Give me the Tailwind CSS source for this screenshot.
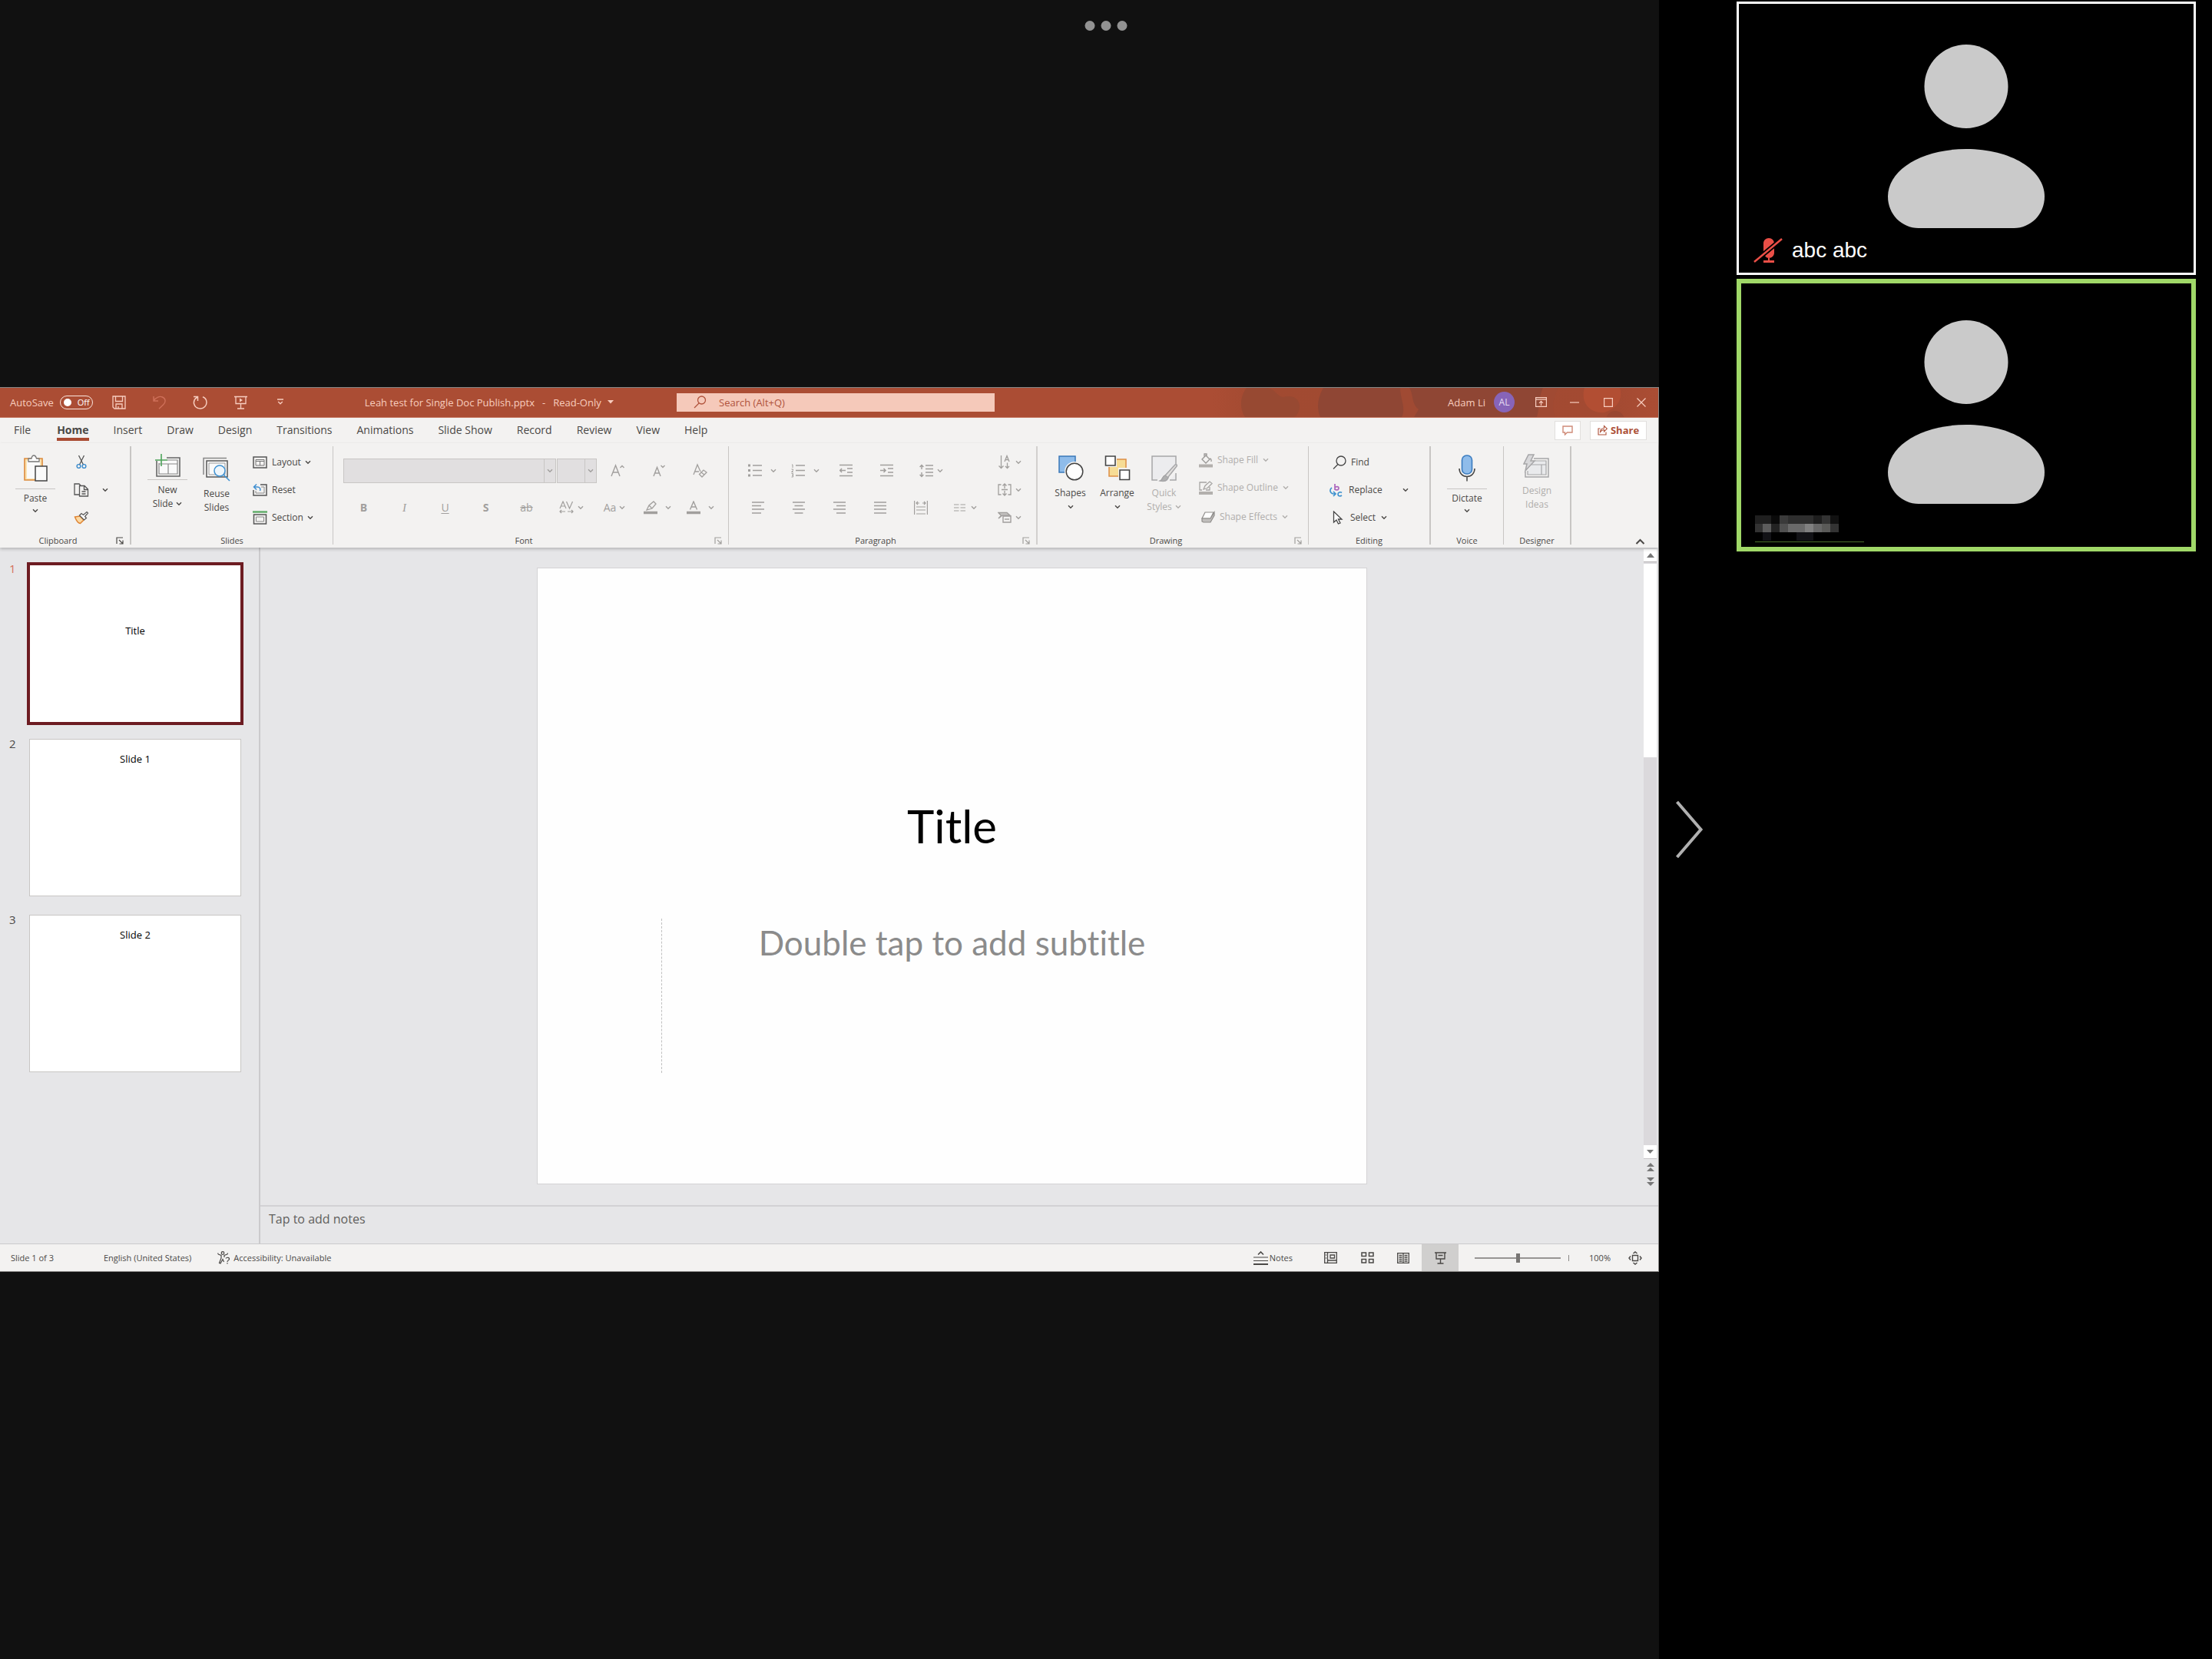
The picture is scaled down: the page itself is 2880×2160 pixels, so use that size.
<!DOCTYPE html>
<html lang="en">
<head>
    <meta charset="UTF-8">
    <meta name="viewport" content="width=device-width, initial-scale=1.0">
    <script src="https://cdn.jsdelivr.net/npm/@tailwindcss/browser@4"></script>
    <title>Meeting - shared screen</title>
</head>
<body class="bg-black">
  <!-- Shared icons -->
  <svg class="hidden">
    <symbol id="chev" viewBox="0 0 8 6"><path d="M1 1.2 L4 4.2 L7 1.2" fill="none" stroke="currentColor" stroke-width="1.4"/></symbol>
    <symbol id="launch" viewBox="0 0 10 10"><path d="M1 9V1H9M4 4L8.5 8.5M9 4.5V9H4.5" fill="none" stroke="currentColor" stroke-width="1.2"/></symbol>
    <symbol id="person" viewBox="0 0 204 239"><circle cx="102" cy="54.5" r="54.5"/><path d="M102 136C160 136 204 163 204 198C204 221 186 239 164 239H40C18 239 0 221 0 198C0 163 44 136 102 136Z"/></symbol>
  </svg>

  <div class="relative flex min-h-screen font-['Open_Sans','Noto_Sans',sans-serif] text-[12px] leading-[18px] text-[#4a4846]">
    <button type="button" aria-label="More" class="absolute top-[27px] left-1/2 -translate-x-1/2 flex gap-2 z-10">
      <span class="size-[13px] rounded-full bg-[#929292]"></span>
      <span class="size-[13px] rounded-full bg-[#929292]"></span>
      <span class="size-[13px] rounded-full bg-[#929292]"></span>
    </button>

    <!-- Shared screen -->
    <main class="w-3/4 bg-[#111] flex flex-col justify-center">
      <div class="border-t border-r border-b border-[#8a8886] bg-[#e6e6e8]">

        <!-- Title bar -->
        <header class="relative h-[39px] bg-[#ab4d34] border-b border-[#c4755f] flex items-center text-[13px] text-[#f8cdbf]">
          <svg class="absolute right-0 top-0 h-[38px] w-[580px]" viewBox="0 0 580 38" aria-hidden="true">
            <defs>
              <linearGradient id="deco"><stop offset="0" stop-color="#ab4d34"/><stop offset=".12" stop-color="#a14a31"/><stop offset=".9" stop-color="#a34a32"/><stop offset="1" stop-color="#ab4d34"/></linearGradient>
            </defs>
            <rect width="580" height="38" fill="url(#deco)"/>
            <path d="M44 0H72C82 2 84 12 92 12C106 8 114 16 113 26C112 32 109 38 104 38H42C34 26 36 10 44 0Z" fill="#974932"/>
            <path d="M144 0H430C436 12 430 26 434 38H140C134 24 138 10 144 0Z" fill="#8f4634"/>
            <path d="M244 0H256C262 10 258 20 268 28L262 38H246C252 26 244 14 244 0Z" fill="#a04a33"/>
            <path d="M430 0H450C444 12 440 24 446 38H422C426 24 424 12 430 0Z" fill="#a04a33"/>
            <path d="M484 0H530C534 14 528 26 510 32C492 34 478 20 484 0Z" fill="#b24e33"/>
            <circle cx="524" cy="42" r="12" fill="#994732"/>
          </svg>
          <label class="flex items-center ml-[13px] gap-2">
            AutoSave
            <input type="checkbox" class="peer sr-only">
            <span class="flex items-center w-[43px] h-[18px] rounded-full border-[1.5px] border-[#fbe5dd] pl-1 gap-2 text-[11px] text-white">
              <span class="size-[10px] rounded-full bg-white"></span>Off
            </span>
          </label>
          <button type="button" aria-label="Save" class="ml-[25px]">
            <svg width="18" height="18" viewBox="0 0 18 18" fill="none" stroke="currentColor" stroke-width="1.3"><path d="M1 1H17V17H3L1 15ZM4.500 1V7.500H13.500V1M5 17V11H13V17M8 17V14"/></svg>
          </button>
          <button type="button" aria-label="Undo" class="ml-[34px] text-[#cf705a]">
            <svg width="19" height="18" viewBox="0 0 19 18" fill="none" stroke="currentColor" stroke-width="1.400"><path d="M2 1V7H8M2 7C5 2 10 .5 13.500 2C18 4 18 8.500 15 11.500L9 17.200"/></svg>
          </button>
          <button type="button" aria-label="Redo" class="ml-[34px]">
            <svg width="19" height="18" viewBox="0 0 19 18" fill="none" stroke="currentColor" stroke-width="1.500"><path d="M1 1.500H6.500V7M6 2C2.500 4 1 7 1.500 10.500C2.500 14.500 6 17 10 17C14.500 16.800 18 13 18 9C18 6 16 3 13 1.800"/></svg>
          </button>
          <button type="button" aria-label="Start from beginning" class="ml-[34px]">
            <svg width="19" height="18" viewBox="0 0 19 18" fill="none" stroke="currentColor" stroke-width="1.300"><path d="M1 1.500H18M3 1.500V10.500H16V1.500M9.500 10.500V17M5 17H14"/><path d="M8 3.500L12 6L8 8.500Z" fill="currentColor" stroke="none"/></svg>
          </button>
          <button type="button" aria-label="Customize toolbar" class="ml-[37px]">
            <svg width="10" height="9" viewBox="0 0 10 9" fill="none" stroke="currentColor" stroke-width="1.300"><path d="M1 1H9M2.200 4L5 6.800L7.800 4"/></svg>
          </button>
          <h1 class="ml-[105px] flex gap-[10px]"><span>Leah test for Single Doc Publish.pptx</span><span>-</span><span>Read-Only</span></h1>
          <svg class="ml-2" width="8" height="5" viewBox="0 0 8 5"><path d="M0 0H8L4 4.500Z" fill="currentColor"/></svg>
          <div class="absolute left-[881px] top-[7px] flex items-center w-[414px] h-6 bg-[#f5c9ba] text-[#b0523b]">
            <svg class="ml-[22px]" width="17" height="17" viewBox="0 0 17 17" fill="none" stroke="currentColor" stroke-width="1.300"><circle cx="10.500" cy="6" r="5"/><path d="M7 10L1 16"/></svg>
            <input type="search" aria-label="Search" placeholder="Search (Alt+Q)" class="ml-4 flex-1 bg-transparent outline-none placeholder:text-[#b0523b]">
          </div>
          <div class="relative ml-auto flex items-center mr-4">
            <span class="mr-[11px]">Adam Li</span>
            <span class="size-[27px] rounded-full bg-[#8764b8] text-[#e6dcf2] text-[12px] flex items-center justify-center mr-[27px]">AL</span>
            <button type="button" aria-label="Ribbon display options" class="mr-[30px]"><svg width="15" height="13" viewBox="0 0 15 13" fill="none" stroke="currentColor" stroke-width="1.200"><path d="M.6 .6H14.400V12.400H.6ZM.6 3.200H14.400M7.500 11V5.500M5 7.800L7.500 5.300L10 7.800"/></svg></button>
            <button type="button" aria-label="Minimize" class="mr-[32px]"><svg width="12" height="12" viewBox="0 0 12 12"><path d="M0 6H12" stroke="currentColor" stroke-width="1.200"/></svg></button>
            <button type="button" aria-label="Maximize" class="mr-[31px]"><svg width="12" height="12" viewBox="0 0 12 12"><path d="M.6 .6H11.400V11.400H.6Z" fill="none" stroke="currentColor" stroke-width="1.200"/></svg></button>
            <button type="button" aria-label="Close"><svg width="12" height="12" viewBox="0 0 12 12"><path d="M.5 .5L11.500 11.500M11.500 .5L.5 11.500" stroke="currentColor" stroke-width="1.200"/></svg></button>
          </div>
        </header>

        <!-- Ribbon tabs -->
        <nav class="h-[33px] bg-[#f3f2f1] flex items-center pl-[18px] pr-[15px] gap-8 text-[14px] leading-[20px]">
          <button type="button" class="mr-[2px]">File</button>
          <button type="button" class="font-bold border-b-4 border-[#a94b32] pt-1">Home</button>
          <button type="button">Insert</button>
          <button type="button">Draw</button>
          <button type="button">Design</button>
          <button type="button">Transitions</button>
          <button type="button">Animations</button>
          <button type="button">Slide Show</button>
          <button type="button">Record</button>
          <button type="button">Review</button>
          <button type="button">View</button>
          <button type="button">Help</button>
          <div class="ml-auto flex gap-3 text-[#ad5139]">
            <button type="button" aria-label="Comments" class="w-[34px] h-[25px] bg-white border border-[#e1dfdd] flex items-center justify-center">
              <svg width="14" height="13" viewBox="0 0 14 13" fill="none" stroke="#cf8b78" stroke-width="1.400"><path d="M1 1H13V9H6.500L3.500 12V9H1Z"/></svg>
            </button>
            <button type="button" class="w-[74px] h-[25px] bg-white border border-[#e1dfdd] flex items-center justify-center gap-1 font-bold text-[13px]">
              <svg width="13" height="14" viewBox="0 0 13 14" fill="none" stroke="currentColor" stroke-width="1.100"><path d="M3.500 5H1V13H11V9.500M3.500 9.500C3.500 6.500 5.500 4.500 8.500 4.500V1.500L12.300 5.200L8.500 9V6.500C6.500 6.500 5 7.500 3.500 9.500Z"/></svg>
              Share
            </button>
          </div>
        </nav>

        <!-- Ribbon -->
        <div class="relative z-[1] h-[136px] bg-[#f3f2f1] flex pt-1 pb-1 shadow-[0_2px_4px_rgba(0,0,0,0.22)]">

          <section class="w-[171px] border-r-2 border-[#c8c6c4] flex flex-col">
            <div class="flex h-[118px] pt-[3px] pb-[7px]">
              <button type="button" class="ml-5 w-[52px] flex flex-col items-center pt-2 text-center">
                <svg width="34" height="36" viewBox="0 0 34 36" fill="none"><path d="M3 5H26V33H3Z" fill="#fbe2b0" stroke="#dd8a3b" stroke-width="1.600"/><path d="M6 8H23V31H6Z" fill="#fafafa"/><path d="M8 9V5H12C12.500 2 14 1 15 1C17 1 18 3 18.500 5H22V9Z" fill="#fff" stroke="#777" stroke-width="1.300"/><path d="M17 15H32V34H17Z" fill="#fafafa" stroke="#444" stroke-width="1.500"/></svg>
                <span class="mt-2 w-full border-t border-[#c8c6c4] pt-[3px]">Paste</span>
                <svg class="w-2 h-[6px] mt-1"><use href="#chev"/></svg>
              </button>
              <div class="ml-5 w-7 grid grid-rows-3 h-[108px] justify-items-center items-center">
                <button type="button" aria-label="Cut"><svg width="14" height="19" viewBox="0 0 14 19" fill="none"><path d="M3.500 1L9.500 13M10.500 1L4.500 13" stroke="#555" stroke-width="1.300"/><circle cx="3.500" cy="15" r="2.400" stroke="#3a8bcd" stroke-width="1.400"/><circle cx="10.500" cy="15" r="2.400" stroke="#3a8bcd" stroke-width="1.400"/></svg></button>
                <button type="button" aria-label="Copy"><svg width="20" height="18" viewBox="0 0 20 18" fill="none" stroke="#555" stroke-width="1.300"><path d="M7 15H1V1H7L9 3M7.500 3.500H14L18.500 8V17H7.500ZM13.500 4V8.500H18M10.500 11H15.500M10.500 14H15.500"/></svg></button>
                <button type="button" aria-label="Format painter"><svg width="20" height="18" viewBox="0 0 20 18" fill="none"><path d="M1.500 8L8 7L13 12L8.500 16.500C5 16 3 12 1.500 8Z" fill="#fbd9a4" stroke="#df8433" stroke-width="1.500"/><path d="M7.500 6L10 3.500L12.500 5.500L17 1.500L18.500 3L14.500 7.500L16.500 9.500L13.500 12Z" fill="#fff" stroke="#555" stroke-width="1.200"/></svg></button>
              </div>
              <button type="button" aria-label="Copy options" class="ml-[13px]"><svg class="w-2 h-[6px]"><use href="#chev"/></svg></button>
            </div>
            <div class="flex items-center text-[11px] leading-[10px]"><span class="flex-1 text-center">Clipboard</span><button type="button" aria-label="Clipboard settings" class="w-[18px]"><svg class="size-[10px]"><use href="#launch"/></svg></button></div>
          </section>

          <section class="w-[263px] border-r border-[#c8c6c4] flex flex-col">
            <div class="flex h-[118px] pt-[3px] pb-[7px]">
              <button type="button" class="ml-[21px] w-[52px] flex flex-col items-center pt-[6px]">
                <svg width="35" height="32" viewBox="0 0 35 32" fill="none"><path d="M3 10V30H33V6H16" stroke="#666" stroke-width="1.600"/><path d="M6 13V27H30V9H17" fill="#fafafa" stroke="#888" stroke-width="1.200"/><path d="M6 14H30M18 14V27" stroke="#888" stroke-width="1.200"/><path d="M9 1V17M1 9H17" stroke="#4da35a" stroke-width="1.600"/></svg>
                <span class="mt-[2px] w-full border-t border-[#c8c6c4] pt-1">New</span>
                <span class="flex items-center gap-1">Slide <svg class="w-2 h-[6px]"><use href="#chev"/></svg></span>
              </button>
              <button type="button" class="ml-3 w-[52px] flex flex-col items-center pt-[11px]">
                <svg width="36" height="32" viewBox="0 0 36 32" fill="none"><path d="M1 23V1.500H31" stroke="#888" stroke-width="1.500"/><path d="M5 5H32V26H5Z" fill="#fafafa" stroke="#555" stroke-width="1.500"/><path d="M8 8H29V23H8Z" stroke="#999"/><circle cx="22" cy="18" r="7" fill="#eef6fc" stroke="#3f92d2" stroke-width="1.500"/><path d="M27 23L35 31" stroke="#3f92d2" stroke-width="1.600"/></svg>
                <span class="mt-[7px]">Reuse<br>Slides</span>
              </button>
              <div class="ml-[21px] grid grid-rows-3 h-[108px]">
                <button type="button" class="flex items-center gap-[6px]"><svg width="19" height="16" viewBox="0 0 19 16" fill="none"><path d="M1 1H18V15H1Z" stroke="#555" stroke-width="1.500"/><path d="M4 4.500H15V12H4ZM4 6.500H15M9.500 6.500V12" stroke="#777"/></svg>Layout <svg class="w-2 h-[6px] -ml-px"><use href="#chev"/></svg></button>
                <button type="button" class="flex items-center gap-[6px]"><svg width="19" height="16" viewBox="0 0 19 16" fill="none"><path d="M10 1H18V15H1V8" stroke="#555" stroke-width="1.500"/><path d="M11 4H15V12H4V9" stroke="#888"/><path d="M5 .5L1.500 4L5 7.500M2 4H6C9 4 10.500 6 9.500 9" stroke="#3f8fd0" stroke-width="1.500"/></svg>Reset</button>
                <button type="button" class="flex items-center gap-[6px]"><svg width="19" height="18" viewBox="0 0 19 18" fill="none"><path d="M0 1.500H19" stroke="#5cab66" stroke-width="2.400"/><path d="M1.500 5H17.500V17H1.500Z" stroke="#555" stroke-width="1.500"/><path d="M4.500 8H14.500V14H4.500Z" stroke="#888"/></svg>Section <svg class="w-2 h-[6px] -ml-px"><use href="#chev"/></svg></button>
              </div>
            </div>
            <div class="text-[11px] leading-[10px] text-center">Slides</div>
          </section>

          <section class="w-[515px] border-r border-[#c8c6c4] flex flex-col text-[#a19f9d]">
            <div class="h-[118px] pt-[8px] pl-[13px]">
              <div class="flex items-center h-12">
                <div class="relative w-[277px]">
                  <select disabled aria-label="Font" class="block appearance-none w-full h-8 bg-[#e1dfe0] border border-[#c8c6c4]"><option></option></select>
                  <span class="absolute right-px top-px bottom-px w-[15px] border-l border-[#c8c6c4] flex items-center justify-center"><svg class="w-2 h-[6px]"><use href="#chev"/></svg></span>
                </div>
                <div class="relative w-[52px] ml-px">
                  <select disabled aria-label="Font size" class="block appearance-none w-full h-8 bg-[#e1dfe0] border border-[#c8c6c4]"><option></option></select>
                  <span class="absolute right-px top-px bottom-px w-[15px] border-l border-[#c8c6c4] flex items-center justify-center"><svg class="w-2 h-[6px]"><use href="#chev"/></svg></span>
                </div>
                <button type="button" aria-label="Grow font" class="w-[54px] flex justify-center"><svg width="18" height="17" viewBox="0 0 18 17" fill="none" stroke="currentColor" stroke-width="1.400"><path d="M1 16L6.500 2L12 16M3 11H10M12.500 5L15 2.500L17.500 5"/></svg></button>
                <button type="button" aria-label="Shrink font" class="w-[54px] flex justify-center"><svg width="16" height="17" viewBox="0 0 16 17" fill="none" stroke="currentColor" stroke-width="1.400"><path d="M1 16L5.500 4.500L10 16M2.500 12H8.500M10.500 2L13 4.500L15.500 2"/></svg></button>
                <button type="button" aria-label="Clear formatting" class="w-[52px] flex justify-center"><svg width="19" height="19" viewBox="0 0 19 19" fill="none" stroke="currentColor" stroke-width="1.300"><path d="M1 15L6 2L10 11M3 11H8M8.500 14.500L14 9L18 12L12 18Z M11 12L15 15"/></svg></button>
              </div>
              <div class="flex items-center h-12 text-[14px]">
                <button type="button" class="w-[53px] font-bold">B</button>
                <button type="button" class="w-[53px] italic font-['Liberation_Serif',serif] text-[15px]">I</button>
                <button type="button" class="w-[53px] underline underline-offset-2">U</button>
                <button type="button" class="w-[53px] font-bold">S</button>
                <button type="button" class="w-[53px] line-through">ab</button>
                <button type="button" aria-label="Character spacing" class="ml-1 w-14 flex items-center justify-center gap-[5px]"><svg width="19" height="17" viewBox="0 0 19 17" fill="none" stroke="currentColor" stroke-width="1.200"><path d="M1 10L5 1L9 10M2.500 7H7.500M9.500 1L13.500 10L17.500 1M1 14H8M11 14H18M3 12L1 14L3 16M16 12L18 14L16 16"/></svg><svg class="w-2 h-[6px]"><use href="#chev"/></svg></button>
                <button type="button" class="w-14 flex items-center justify-center gap-1">Aa<svg class="w-2 h-[6px]"><use href="#chev"/></svg></button>
                <button type="button" aria-label="Highlight color" class="w-14 flex items-center justify-center gap-[10px]"><svg width="18" height="18" viewBox="0 0 18 18" fill="none" stroke="currentColor" stroke-width="1.300"><path d="M4 12L7 6L13 1L16 4L11 10L4 12ZM7 6L11 10"/><path d="M0 15.500H18" stroke-width="3.500"/></svg><svg class="w-2 h-[6px]"><use href="#chev"/></svg></button>
                <button type="button" aria-label="Font color" class="w-14 flex items-center justify-center gap-[10px]"><svg width="18" height="18" viewBox="0 0 18 18" fill="none" stroke="currentColor" stroke-width="1.400"><path d="M4.500 11.500L9 1L13.500 11.500M6 8H12"/><path d="M0 15.500H18" stroke-width="3.500"/></svg><svg class="w-2 h-[6px]"><use href="#chev"/></svg></button>
              </div>
            </div>
            <div class="flex items-center text-[11px] leading-[10px]"><span class="flex-1 text-center text-[#4a4846]">Font</span><button type="button" aria-label="Font settings" class="w-[18px]"><svg class="size-[10px]"><use href="#launch"/></svg></button></div>
          </section>

          <section class="w-[402px] border-r-2 border-[#d2d0ce] flex flex-col text-[#a19f9d]">
            <div class="flex justify-between h-[118px] pr-[19px]">
              <div class="pt-2 pl-[11px]">
                <div class="flex items-center h-12 pl-[5px]">
                  <button type="button" aria-label="Bullets" class="w-[54px] flex items-center justify-center gap-[11px]"><svg width="18" height="17" viewBox="0 0 18 17" stroke="currentColor" stroke-width="1.500"><path d="M6 2H18M6 8.500H18M6 15H18"/><path d="M0 2H3M0 8.500H3M0 15H3" stroke-width="3"/></svg><svg class="w-2 h-[6px]"><use href="#chev"/></svg></button>
                  <button type="button" aria-label="Numbering" class="ml-[2px] w-[54px] flex items-center justify-center gap-[11px]"><svg width="18" height="18" viewBox="0 0 18 18" fill="none" stroke="currentColor" stroke-width="1.500"><path d="M6 2H18M6 8.500H18M6 15H18"/><path d="M1 1H2V5M.5 7H2.500V8.500L.5 10.500H3M.5 12.500H2.500V17H.5M1 14.700H2.500" stroke-width="1"/></svg><svg class="w-2 h-[6px]"><use href="#chev"/></svg></button>
                  <button type="button" aria-label="Decrease indent" class="w-[53px] flex justify-center"><svg width="17" height="17" viewBox="0 0 17 17" fill="none" stroke="currentColor" stroke-width="1.500"><path d="M0 1.500H17M10 6H17M10 11H17M0 15.500H17M0 8.500H8M3 6L.8 8.500L3 11"/></svg></button>
                  <button type="button" aria-label="Increase indent" class="w-[53px] flex justify-center"><svg width="17" height="17" viewBox="0 0 17 17" fill="none" stroke="currentColor" stroke-width="1.500"><path d="M0 1.500H17M10 6H17M10 11H17M0 15.500H17M0 8.500H7M4.500 6L7 8.500L4.500 11"/></svg></button>
                  <button type="button" aria-label="Line spacing" class="w-[62px] flex items-center justify-center gap-[5px]"><svg width="18" height="18" viewBox="0 0 18 18" fill="none" stroke="currentColor" stroke-width="1.400"><path d="M8 2H18M8 6.500H18M8 11H18M8 15.500H18M3 1.500V7M3 11V16.500M.6 4L3 1.500L5.400 4M.6 14L3 16.500L5.400 14"/></svg><svg class="w-2 h-[6px]"><use href="#chev"/></svg></button>
                </div>
                <div class="flex items-center h-12">
                  <button type="button" aria-label="Align left" class="w-[53px] flex justify-center"><svg width="16" height="16" viewBox="0 0 16 16" stroke="currentColor" stroke-width="1.500"><path d="M0 1H16M0 5.500H12M0 10H16M0 15H12"/></svg></button>
                  <button type="button" aria-label="Center" class="w-[53px] flex justify-center"><svg width="16" height="16" viewBox="0 0 16 16" stroke="currentColor" stroke-width="1.500"><path d="M0 1H16M2.500 5.500H13.500M0 10H16M2.500 15H13.500"/></svg></button>
                  <button type="button" aria-label="Align right" class="w-[53px] flex justify-center"><svg width="16" height="16" viewBox="0 0 16 16" stroke="currentColor" stroke-width="1.500"><path d="M0 1H16M4 5.500H16M0 10H16M4 15H16"/></svg></button>
                  <button type="button" aria-label="Justify" class="w-[53px] flex justify-center"><svg width="16" height="16" viewBox="0 0 16 16" stroke="currentColor" stroke-width="1.500"><path d="M0 1H16M0 5.500H16M0 10H16M0 15H16"/></svg></button>
                  <button type="button" aria-label="Distribute" class="w-[53px] flex justify-center"><svg width="18" height="18" viewBox="0 0 18 18" fill="none" stroke="currentColor" stroke-width="1.200"><path d="M.6 0V18M17.400 0V18M3 8H15M3 12H15M3 17H15M3 3H7M11 3H15M5 1L3 3L5 5M13 1L15 3L13 5"/></svg></button>
                  <button type="button" aria-label="Columns" class="w-16 flex items-center justify-center gap-[7px]"><svg width="15" height="10" viewBox="0 0 15 10" stroke="currentColor" stroke-width="1.200"><path d="M0 1H6.500M8.500 1H15M0 5H6.500M8.500 5H15M0 9H6.500M8.500 9H15"/></svg><svg class="w-2 h-[6px]"><use href="#chev"/></svg></button>
                </div>
              </div>
              <div class="grid grid-rows-3 pt-[3px] pb-[7px]">
                <button type="button" aria-label="Text direction" class="flex items-center gap-[5px]"><svg width="18" height="19" viewBox="0 0 18 19" fill="none" stroke="currentColor" stroke-width="1.300"><path d="M4.500 1V17M1.500 14.500L4.500 17.500L7.500 14.500M9 9L12 1.500L15 9M10 6.500H14M12.500 10.500V17M10 15L12.500 17.500L15 15"/></svg><svg class="w-2 h-[6px]"><use href="#chev"/></svg></button>
                <button type="button" aria-label="Align text" class="flex items-center gap-[5px]"><svg width="18" height="17" viewBox="0 0 18 17" fill="none" stroke="currentColor" stroke-width="1.300"><path d="M4.500 2H1V15H4.500M13.500 2H17V15H13.500M9 1V7M9 10V16M6.500 3.500L9 1L11.500 3.500M6.500 13.500L9 16L11.500 13.500M5 8.500H13"/></svg><svg class="w-2 h-[6px]"><use href="#chev"/></svg></button>
                <button type="button" aria-label="Convert to SmartArt" class="flex items-center gap-[5px]"><svg width="18" height="15" viewBox="0 0 18 15" fill="none" stroke="currentColor" stroke-width="1.400"><path d="M1 1.500H12L16 5H6L1 9L4.500 5.300Z" fill="#c8c6c4"/><path d="M7 6H17V14H7Z" fill="#f3f2f1"/><path d="M9 10H15"/></svg><svg class="w-2 h-[6px]"><use href="#chev"/></svg></button>
              </div>
            </div>
            <div class="flex items-center text-[11px] leading-[10px]"><span class="flex-1 text-center text-[#4a4846]">Paragraph</span><button type="button" aria-label="Paragraph settings" class="w-[18px]"><svg class="size-[10px]"><use href="#launch"/></svg></button></div>
          </section>

          <section class="w-[353px] border-r border-[#c8c6c4] flex flex-col">
            <div class="flex h-[118px] pt-[3px] pb-[7px]">
              <button type="button" class="ml-3 w-[61px] flex flex-col items-center pt-2">
                <svg width="34" height="34" viewBox="0 0 34 34"><path d="M2 2H23V23H2Z" fill="#8fbcea" stroke="#3b78b8" stroke-width="1.500"/><circle cx="22" cy="22" r="13" fill="#f3f2f1"/><circle cx="22" cy="22" r="10.800" fill="#fff" stroke="#444" stroke-width="1.500"/></svg>
                <span class="mt-[7px]">Shapes</span>
                <svg class="w-2 h-[6px] mt-[6px]"><use href="#chev"/></svg>
              </button>
              <button type="button" class="w-[61px] flex flex-col items-center pt-2">
                <svg width="34" height="34" viewBox="0 0 34 34"><path d="M6 6H28V28H6Z" fill="#f6dc95" stroke="#dd8f45" stroke-width="1.500"/><path d="M0 0H16V16H0ZM18 17H34V34H18Z" fill="#f3f2f1"/><path d="M1.500 2H14V14H1.500ZM20 20H32.500V32.500H20Z" fill="#fff" stroke="#444" stroke-width="1.600"/></svg>
                <span class="mt-[7px]">Arrange</span>
                <svg class="w-2 h-[6px] mt-[6px]"><use href="#chev"/></svg>
              </button>
              <button type="button" class="w-[61px] flex flex-col items-center pt-2 text-[#b0aeac]">
                <svg width="34" height="36" viewBox="0 0 34 36" fill="none" stroke="#a6a6a8" stroke-width="1.500"><path d="M8 33H1V2H32V12M32 24V33H24" fill="#ececee"/><path d="M12 34C15 33 14 28 18 27L31 13C33 12 34 14 33 15L22 29C21 34 17 35 12 34Z" fill="#e1dfdd"/><path d="M12 34C15 33 14 28 18 27L22 30C20 34 16 35 12 34Z" fill="#b0b0b0"/></svg>
                <span class="mt-[5px]">Quick</span>
                <span class="flex items-center gap-1">Styles <svg class="w-2 h-[6px]"><use href="#chev"/></svg></span>
              </button>
              <div class="ml-[15px] grid grid-rows-[31px_41px_34px] text-[#b0aeac]">
                <button type="button" class="flex items-center gap-[6px]"><svg width="18" height="19" viewBox="0 0 18 19" fill="none" stroke="#9a9896" stroke-width="1.300"><path d="M4 8L9 3L14 8L9 13ZM7 6V1H10V5M14 8C15 6 16.500 8 16 11"/><path d="M0 16.500H18" stroke="#b3b0ad" stroke-width="4"/></svg>Shape Fill <svg class="w-2 h-[6px]"><use href="#chev"/></svg></button>
                <button type="button" class="flex items-center gap-[6px]"><svg width="18" height="18" viewBox="0 0 18 18" fill="none" stroke="#a6a4a2" stroke-width="1.300"><path d="M10 2H1V12H4M14 8V12H9M6 11L8 6.500L14 1L17 3.500L11 9.500Z"/><path d="M0 16H18" stroke="#b3b0ad" stroke-width="4"/></svg>Shape Outline <svg class="w-2 h-[6px]"><use href="#chev"/></svg></button>
                <button type="button" class="flex items-center gap-[6px] pl-[3px]"><svg width="18" height="16" viewBox="0 0 18 16" stroke="#8f8d8b" stroke-width="1.200"><path d="M1 10L5 2H16L12 10Z" fill="#fff"/><path d="M1 10V14L3 15H12L17 6V2L12 10Z" fill="#c0bebc"/></svg>Shape Effects <svg class="w-2 h-[6px]"><use href="#chev"/></svg></button>
              </div>
            </div>
            <div class="flex items-center text-[11px] leading-[10px]"><span class="flex-1 text-center">Drawing</span><button type="button" aria-label="Drawing settings" class="w-[18px] text-[#a19f9d]"><svg class="size-[10px]"><use href="#launch"/></svg></button></div>
          </section>

          <section class="w-[159px] border-r-2 border-[#c8c6c4] flex flex-col">
            <div class="grid grid-rows-3 h-[118px] pt-[3px] pb-[7px] pl-[27px]">
              <button type="button" class="flex items-center gap-[6px] pl-1"><svg width="18" height="18" viewBox="0 0 18 18" fill="none" stroke="#444" stroke-width="1.300"><circle cx="11" cy="7" r="6"/><path d="M7 11.500L1 17.500"/></svg>Find</button>
              <div class="flex items-center"><button type="button" class="flex items-center gap-2"><svg width="17" height="18" viewBox="0 0 17 18" fill="none" stroke-width="1.700"><path d="M7 1V9M7 6C8 4 12 4 12 6.500C12 9.500 8 9.500 7 7.500" stroke="#ad67bd"/><path d="M3 6C0 8 0 13 5 14H7M5 11L8 14L5 17M16 12.500C14 11 11 12 11 14.500C11 17 14 17.500 16 16" stroke="#3f92cf"/></svg>Replace</button><button type="button" aria-label="Replace options" class="ml-[26px]"><svg class="w-2 h-[6px]"><use href="#chev"/></svg></button></div>
              <button type="button" class="flex items-center gap-[9px] pl-1"><svg width="14" height="18" viewBox="0 0 14 18" fill="#fff" stroke="#444" stroke-width="1.300"><path d="M1.500 1V15L5 12L7.500 17L10 16L7.500 11H12Z"/></svg>Select <svg class="w-2 h-[6px] -ml-[2px]"><use href="#chev"/></svg></button>
            </div>
            <div class="text-[11px] leading-[10px] text-center">Editing</div>
          </section>

          <section class="w-[95px] border-r border-[#c8c6c4] flex flex-col items-center">
            <button type="button" class="h-[118px] w-[52px] flex flex-col items-center pt-[11px]">
              <svg width="22" height="35" viewBox="0 0 22 35" fill="none"><rect x="4.500" y="1" width="13" height="24" rx="6" fill="#8fbcea" stroke="#3b7cc0" stroke-width="1.600"/><path d="M1 18C1 24 5 28.500 11 28.500C17 28.500 21 24 21 18M11 28.500V34.500" stroke="#444" stroke-width="1.500"/></svg>
              <span class="mt-[9px] w-full border-t border-[#c8c6c4] pt-[3px]">Dictate</span>
              <svg class="w-2 h-[6px] mt-1"><use href="#chev"/></svg>
            </button>
            <div class="text-[11px] leading-[10px]">Voice</div>
          </section>

          <section class="w-[88px] border-r-2 border-[#c8c6c4] flex flex-col items-center">
            <button type="button" class="h-[118px] flex flex-col items-center pt-[10px] text-[#b0aeac]">
              <svg width="35" height="32" viewBox="0 0 35 32" fill="none" stroke="#a6a6a8" stroke-width="1.500"><path d="M14 6H33V30H3V23"/><path d="M15 9H30V27H6V22M11 14H30M24 14V27" stroke-width="1.200" fill="#e9eaec"/><path d="M7 1H14L10 9H15L3 22L5 13H1Z" fill="#d8d8da"/></svg>
              <span class="mt-[7px]">Design<br>Ideas</span>
            </button>
            <div class="text-[11px] leading-[10px]">Designer</div>
          </section>

          <button type="button" aria-label="Collapse ribbon" class="ml-auto self-end mr-[17px]"><svg width="13" height="8" viewBox="0 0 13 8" fill="none" stroke="currentColor" stroke-width="2"><path d="M1.500 7L6.500 2L11.500 7"/></svg></button>
        </div>

        <!-- Slides panel and editor -->
        <div class="flex">
          <aside class="w-[339px] shrink-0 border-r-2 border-[#cbcacc] pt-[19px] pl-3 text-[15px]">
            <a href="#" class="flex mb-[18px]"><span class="w-[23px] text-[#d5705a] leading-[16px]">1</span><span class="w-[282px] h-[212px] border-4 border-[#6d1c22] bg-white flex justify-center text-black text-[13px] pt-[76px]">Title</span></a>
            <a href="#" class="flex mb-6"><span class="w-[26px] leading-[12px]">2</span><span class="w-[276px] h-[205px] border border-[#c8c6c4] bg-white flex justify-center text-black text-[13px] pt-4">Slide 1</span></a>
            <a href="#" class="flex"><span class="w-[26px] leading-[12px]">3</span><span class="w-[276px] h-[205px] border border-[#c8c6c4] bg-white flex justify-center text-black text-[13px] pt-4">Slide 2</span></a>
          </aside>
          <div class="flex-1 flex flex-col">
            <div class="flex">
              <div class="flex-1 pt-[26px] pb-[27px]">
                <!-- Current slide -->
                <div class="relative mx-auto w-[60%] aspect-[1081/804] bg-[#fefefe] border border-[#d4d3d5] font-[Lato,sans-serif] text-center pt-[295px] [font-variant-ligatures:none]">
                  <h2 class="text-[60px] leading-[80px] text-black">Title</h2>
                  <p class="mt-[77px] text-[44px] leading-[70px] text-[#8b8b8b]">Double tap to add subtitle</p>
                  <span class="absolute left-[14.9%] top-[456px] h-[201px] border-l border-dashed border-[#c0c0c0]"></span>
                </div>
              </div>
              <!-- Vertical scroll bar -->
              <div class="w-[19px] flex flex-col text-[#777] pt-[2px] pr-[2px]">
                <button type="button" aria-label="Scroll up" class="h-[17px] bg-white border-b border-[#b5b3b5] flex items-center justify-center"><svg width="10" height="6" viewBox="0 0 10 6"><path d="M0 6H10L5 0Z" fill="currentColor"/></svg></button>
                <div class="flex-1 bg-[#dbd9dc] pt-[2px]"><div class="h-[252px] bg-white"></div></div>
                <button type="button" aria-label="Scroll down" class="h-[18px] bg-white border-b border-[#c8c6c8] flex items-center justify-center"><svg width="9" height="5" viewBox="0 0 9 5"><path d="M0 0H9L4.500 5Z" fill="currentColor"/></svg></button>
                <button type="button" aria-label="Previous slide" class="mt-[5px] flex justify-center"><svg width="10" height="11" viewBox="0 0 10 11" fill="currentColor"><path d="M0 5L5 0L10 5ZM0 11L5 6L10 11Z"/></svg></button>
                <button type="button" aria-label="Next slide" class="mt-2 mb-[25px] flex justify-center"><svg width="10" height="11" viewBox="0 0 10 11" fill="currentColor"><path d="M0 0L5 5L10 0ZM0 6L5 11L10 6Z"/></svg></button>
              </div>
            </div>
            <textarea aria-label="Notes" placeholder="Tap to add notes" class="block w-full h-[50px] border-t-2 border-[#d2d1d4] pl-[11px] pt-[6px] text-[16px] leading-[20px] resize-none outline-none placeholder:text-[#605e5c]"></textarea>
          </div>
        </div>

        <!-- Status bar -->
        <footer class="h-9 bg-[#f3f2f1] border-t border-[#cbcacc] flex items-center pl-[14px] pr-[21px] text-[11px] leading-[16px]">
          <span>Slide 1 of 3</span>
          <button type="button" class="ml-[65px]">English (United States)</button>
          <button type="button" class="ml-[34px] flex items-center gap-1"><svg width="17" height="17" viewBox="0 0 17 17" fill="none" stroke="currentColor" stroke-width="1.200"><circle cx="7" cy="2.500" r="1.800"/><path d="M1 4L5 5.500V9L2.500 15.500L4 16L7 10.500L8.500 14M13 4L9 5.500V8M1 4L.8 2.500M13 4L13.500 2.500M11 9.500C12 7.500 16 8 15.500 10.500C15 12 13 12 13 14M13 15V16.500"/></svg>Accessibility: Unavailable</button>
          <button type="button" class="ml-auto flex items-center gap-[2px]"><svg width="19" height="18" viewBox="0 0 19 18" fill="none" stroke="currentColor"><path d="M0 8H19M0 12.500H19" stroke-width="1.200"/><path d="M0 17H19" stroke-width="2"/><path d="M6 4.500L9.500 1L13 4.500" stroke-width="1.600"/></svg>Notes</button>
          <button type="button" aria-label="Normal view" class="ml-[41px]"><svg width="17" height="15" viewBox="0 0 17 15" fill="none" stroke="currentColor" stroke-width="1.300"><path d="M.7 .7H16.300V14.300H.7ZM4.500 .7V14.300M4.500 11H16M8 4H13.500V8H8ZM2 4H3M2 8H3"/></svg></button>
          <button type="button" aria-label="Slide sorter" class="ml-[31px]"><svg width="17" height="15" viewBox="0 0 17 15" fill="none" stroke="currentColor" stroke-width="1.500"><path d="M1 1H6.500V5.500H1ZM10.500 1H16V5.500H10.500ZM1 9.500H6.500V14H1ZM10.500 9.500H16V14H10.500Z"/></svg></button>
          <button type="button" aria-label="Reading view" class="ml-[30px]"><svg width="16" height="14" viewBox="0 0 16 14" fill="none" stroke="currentColor" stroke-width="1.300"><path d="M.7 .7H15.300V13.300H.7ZM8 1V13M2.500 3.500H6.500M2.500 6H6.500M2.500 8.500H6.500M2.500 11H6.500M9.500 3.500H13.500M9.500 6H13.500M9.500 8.500H13.500M9.500 11H13.500"/></svg></button>
          <button type="button" aria-label="Slide show" class="ml-4 w-12 h-full bg-[#d0cfce] flex items-center justify-center"><svg width="15" height="16" viewBox="0 0 15 16" fill="none" stroke="currentColor" stroke-width="1.400"><path d="M0 1H15M2 1V9H13V1M4.500 4.500H10.500M7.500 9V15M3.500 15H11.500"/></svg></button>
          <input type="range" aria-label="Zoom" min="0" max="100" value="50" class="ml-[21px] w-[112px] h-3 appearance-none bg-transparent [&::-webkit-slider-runnable-track]:h-[2px] [&::-webkit-slider-runnable-track]:bg-[#979593] [&::-webkit-slider-thumb]:appearance-none [&::-webkit-slider-thumb]:w-[5px] [&::-webkit-slider-thumb]:h-3 [&::-webkit-slider-thumb]:-mt-[5px] [&::-webkit-slider-thumb]:bg-[#777573]">
          <span class="ml-[10px] h-2 border-l border-[#8a8886]"></span>
          <span class="ml-[26px]">100%</span>
          <button type="button" aria-label="Fit slide to window" class="ml-[23px]"><svg width="18" height="18" viewBox="0 0 18 18" fill="none" stroke="currentColor" stroke-width="1.400"><path d="M5.500 5.500H12.500V12.500H5.500ZM6.500 3L9 1L11.500 3M6.500 15L9 17L11.500 15M3 6.500L1 9L3 11.500M15 6.500L17 9L15 11.500"/></svg></button>
        </footer>
      </div>
    </main>

    <!-- Participants -->
    <aside class="w-1/4 flex pr-[21px] bg-black">
      <button type="button" aria-label="Hide participants" class="w-[101px] shrink-0 pl-[21px]">
        <svg width="38" height="76" viewBox="0 0 38 76" fill="none" stroke="#b0b0b0" stroke-width="4"><path d="M2.500 2L33.500 38L2.500 74"/></svg>
      </button>
      <div class="flex-1 flex flex-col gap-[5px] pt-[2px] text-white">
        <div class="relative aspect-[598/356] border-[3px] border-white pt-[53px]">
          <svg class="mx-auto w-[204px] h-[239px] fill-[#cacaca]"><use href="#person"/></svg>
          <div class="absolute left-[19px] bottom-[11px] flex items-center gap-3 font-['Liberation_Sans',Arial,sans-serif] text-[28px] leading-[36px]">
            <svg width="38" height="32" viewBox="0 0 38 32" aria-label="Muted"><path d="M13 7C13 3 16 0 20 0C24 0 27 3 27 7L13 19ZM27 13V19C27 23 24 26 20 26C18 26 16 25 15 23ZM19 25H21V29H27V32H13V29H19Z" fill="#ea4f47"/><path d="M1 31L37 1" stroke="#000" stroke-width="6"/><path d="M1 31L37 1" stroke="#ea4f47" stroke-width="2.500"/></svg>
            abc abc
          </div>
        </div>
        <div class="relative aspect-[598/355] border-[6px] border-[#a0d868] pt-[48px]">
          <svg class="mx-auto w-[204px] h-[239px] fill-[#cacaca]"><use href="#person"/></svg>
          <!-- Hidden name -->
          <svg class="absolute left-[18px] bottom-[6px] w-[142px] h-[35px]" viewBox="0 0 142 35" shape-rendering="crispEdges">
            <path d="M0 0H21V11H0Z" fill="#1f1f1f"/><path d="M21 0H32V11H21Z" fill="#0a0a0a"/><path d="M32 0H43V11H32Z" fill="#3a3a3a"/><path d="M43 0H76V11H43Z" fill="#2e2e2e"/><path d="M76 0H87V11H76Z" fill="#1e1e1e"/><path d="M87 0H98V11H87Z" fill="#333"/><path d="M98 0H109V11H98Z" fill="#111"/>
            <path d="M0 11H10V22H0Z" fill="#333"/><path d="M10 11H21V22H10Z" fill="#5c5c5c"/><path d="M21 11H32V22H21Z" fill="#222"/><path d="M32 11H43V22H32Z" fill="#505050"/><path d="M43 11H65V22H43Z" fill="#6a6a6a"/><path d="M65 11H76V22H65Z" fill="#808080"/><path d="M76 11H87V22H76Z" fill="#686868"/><path d="M87 11H98V22H87Z" fill="#5a5a58"/><path d="M98 11H109V22H98Z" fill="#333"/>
            <path d="M10 22H21V33H10ZM54 22H76V33H54Z" fill="#121216"/><path d="M0 34H142V35H0Z" fill="#4a6e2a"/>
          </svg>
        </div>
      </div>
    </aside>
  </div>
</body>
</html>
